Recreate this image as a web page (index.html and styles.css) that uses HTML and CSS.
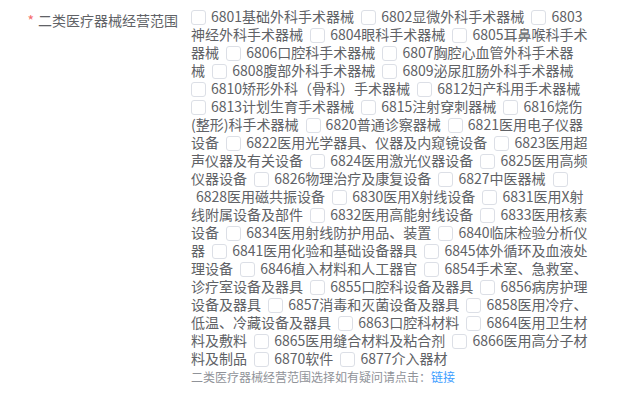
FILE: index.html
```html
<!DOCTYPE html>
<html lang="zh-CN">
<head>
  <meta charset="UTF-8">
  <meta name="viewport" content="width=device-width, initial-scale=1.0">
  <title>二类医疗器械经营范围</title>
  <link rel="stylesheet" href="styles.css">
</head>
<body>
  <form class="scope-form">
    <div class="form-item">
      <label class="form-label is-required">二类医疗器械经营范围</label>
      <div class="form-content">
        <div class="check-group">
          <label class="check"><span class="box"></span><span class="txt">6801基础外科手术器械</span></label>
          <label class="check"><span class="box"></span><span class="txt">6802显微外科手术器械</span></label>
          <label class="check"><span class="box"></span><span class="txt">6803神经外科手术器械</span></label>
          <label class="check"><span class="box"></span><span class="txt">6804眼科手术器械</span></label>
          <label class="check"><span class="box"></span><span class="txt">6805耳鼻喉科手术器械</span></label>
          <label class="check"><span class="box"></span><span class="txt">6806口腔科手术器械</span></label>
          <label class="check"><span class="box"></span><span class="txt">6807胸腔心血管外科手术器械</span></label>
          <label class="check"><span class="box"></span><span class="txt">6808腹部外科手术器械</span></label>
          <label class="check"><span class="box"></span><span class="txt">6809泌尿肛肠外科手术器械</span></label>
          <label class="check"><span class="box"></span><span class="txt">6810矫形外科（骨科）手术器械</span></label>
          <label class="check"><span class="box"></span><span class="txt">6812妇产科用手术器械</span></label>
          <label class="check"><span class="box"></span><span class="txt">6813计划生育手术器械</span></label>
          <label class="check"><span class="box"></span><span class="txt">6815注射穿刺器械</span></label>
          <label class="check"><span class="box"></span><span class="txt">6816烧伤(整形)科手术器械</span></label>
          <label class="check"><span class="box"></span><span class="txt">6820普通诊察器械</span></label>
          <label class="check"><span class="box"></span><span class="txt">6821医用电子仪器设备</span></label>
          <label class="check"><span class="box"></span><span class="txt">6822医用光学器具、仪器及内窥镜设备</span></label>
          <label class="check"><span class="box"></span><span class="txt">6823医用超声仪器及有关设备</span></label>
          <label class="check"><span class="box"></span><span class="txt">6824医用激光仪器设备</span></label>
          <label class="check"><span class="box"></span><span class="txt">6825医用高频仪器设备</span></label>
          <label class="check"><span class="box"></span><span class="txt">6826物理治疗及康复设备</span></label>
          <label class="check"><span class="box"></span><span class="txt">6827中医器械</span></label>
          <label class="check"><span class="box"></span><span class="txt">6828医用磁共振设备</span></label>
          <label class="check"><span class="box"></span><span class="txt">6830医用X射线设备</span></label>
          <label class="check"><span class="box"></span><span class="txt">6831医用X射线附属设备及部件</span></label>
          <label class="check"><span class="box"></span><span class="txt">6832医用高能射线设备</span></label>
          <label class="check"><span class="box"></span><span class="txt">6833医用核素设备</span></label>
          <label class="check"><span class="box"></span><span class="txt">6834医用射线防护用品、装置</span></label>
          <label class="check"><span class="box"></span><span class="txt">6840临床检验分析仪器</span></label>
          <label class="check"><span class="box"></span><span class="txt">6841医用化验和基础设备器具</span></label>
          <label class="check"><span class="box"></span><span class="txt">6845体外循环及血液处理设备</span></label>
          <label class="check"><span class="box"></span><span class="txt">6846植入材料和人工器官</span></label>
          <label class="check"><span class="box"></span><span class="txt">6854手术室、急救室、诊疗室设备及器具</span></label>
          <label class="check"><span class="box"></span><span class="txt">6855口腔科设备及器具</span></label>
          <label class="check"><span class="box"></span><span class="txt">6856病房护理设备及器具</span></label>
          <label class="check"><span class="box"></span><span class="txt">6857消毒和灭菌设备及器具</span></label>
          <label class="check"><span class="box"></span><span class="txt">6858医用冷疗、低温、冷藏设备及器具</span></label>
          <label class="check"><span class="box"></span><span class="txt">6863口腔科材料</span></label>
          <label class="check"><span class="box"></span><span class="txt">6864医用卫生材料及敷料</span></label>
          <label class="check"><span class="box"></span><span class="txt">6865医用缝合材料及粘合剂</span></label>
          <label class="check"><span class="box"></span><span class="txt">6866医用高分子材料及制品</span></label>
          <label class="check"><span class="box"></span><span class="txt">6870软件</span></label>
          <label class="check"><span class="box"></span><span class="txt">6877介入器材</span></label>
        </div>
        <div class="form-tip">二类医疗器械经营范围选择如有疑问请点击：<a href="#">链接</a></div>
      </div>
    </div>
  </form>
</body>
</html>
```

FILE: styles.css
```css
body {
  margin: 0;
  padding: 0;
  background-color: #fff;
  color: #606266;
  font-family: "Noto Sans CJK SC", "Noto Sans", sans-serif;
  font-size: 14px;
}
.form-item {
  display: flex;
  align-items: flex-start;
}
.form-label {
  flex: 0 0 191px;
  box-sizing: border-box;
  padding-right: 13px;
  text-align: right;
  line-height: 40px;
  color: #606266;
}
/* required star */
.form-label.is-required::before {
  content: "*";
  color: #f56c6c;
  margin-right: 4px;
}
.form-content {
  width: 398px;
  padding-top: 7px;
}
.check-group {
  line-height: 18px;
}
.check {
  margin-right: 4px;
  cursor: pointer;
}
.check .box {
  display: inline-block;
  box-sizing: border-box;
  width: 15px;
  height: 15px;
  border: 1px solid #dcdfe6;
  border-radius: 3px;
  background: #fff;
  vertical-align: -3px;
}
.check .txt {
  padding-left: 5px;
}
.form-tip {
  margin-top: 1px;
  font-size: 12px;
  line-height: 18px;
  color: #909399;
}
.form-tip a {
  color: #409eff;
  text-decoration: none;
}
```
